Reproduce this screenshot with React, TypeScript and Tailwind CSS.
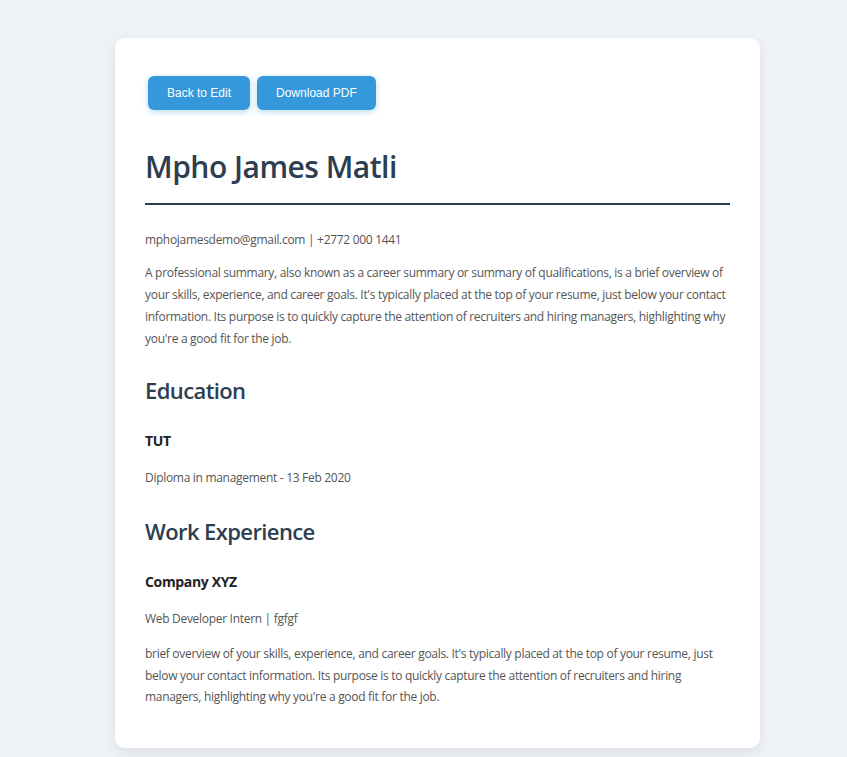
import React from "react";

export default function App() {
  const body = "text-[12px] leading-[22px] text-[#555] tracking-[-0.3px]";
  return (
    <div className="min-h-screen bg-[#eef2f7] pt-[38px] pb-[10px]" style={{ fontFamily: '"Open Sans", "Noto Sans", sans-serif' }}>
      <div className="ml-[115px] w-[645px] rounded-[10px] bg-white px-[30px] pt-[30px] pb-[40px] shadow-[0_4px_12px_rgba(0,0,0,0.08)]">
        <div className="flex gap-[7px] pl-[3px] pt-[8px]" style={{ fontFamily: '"Liberation Sans", Arial, sans-serif' }}>
          <button className="h-[34px] rounded-[6px] bg-[#3498db] px-[19px] text-[12px] text-white shadow-[0_2px_6px_rgba(52,152,219,0.35)]">Back to Edit</button>
          <button className="h-[34px] rounded-[6px] bg-[#3498db] px-[19px] text-[12px] text-white shadow-[0_2px_6px_rgba(52,152,219,0.35)]">Download PDF</button>
        </div>
        <h1 className="mt-[37px] border-b-2 border-[#2c3e50] pb-[16px] text-[30px] leading-[40px] font-semibold tracking-[-0.5px] text-[#2c3e50]">Mpho James Matli</h1>
        <p className={`mt-[24px] ${body}`}>mphojamesdemo@gmail.com | +2772 000 1441</p>
        <p className={`mt-[11px] ${body}`}>
          A professional summary, also known as a career summary or summary of qualifications, is a brief overview of your skills, experience, and career goals. It's typically placed at the top of your resume, just below your contact information. Its purpose is to quickly capture the attention of recruiters and hiring managers, highlighting why you're a good fit for the job.
        </p>
        <h2 className="mt-[24px] text-[22px] leading-[32px] font-semibold tracking-[-0.6px] text-[#2c3e50]">Education</h2>
        <h3 className="mt-[25px] text-[14px] leading-[20px] font-bold tracking-[-0.35px] text-[#222]">TUT</h3>
        <p className={`mt-[16px] ${body}`}>Diploma in management - 13 Feb 2020</p>
        <h2 className="mt-[26px] text-[22px] leading-[32px] font-semibold tracking-[-0.6px] text-[#2c3e50]">Work Experience</h2>
        <h3 className="mt-[25px] text-[14px] leading-[20px] font-bold tracking-[-0.35px] text-[#222]">Company XYZ</h3>
        <p className={`mt-[16px] ${body}`}>Web Developer Intern | fgfgf</p>
        <p className="mt-[13px] text-[12px] leading-[21.5px] text-[#555] tracking-[-0.3px]">
          brief overview of your skills, experience, and career goals. It's typically placed at the top of your resume, just below your contact information. Its purpose is to quickly capture the attention of recruiters and hiring managers, highlighting why you're a good fit for the job.
        </p>
      </div>
    </div>
  );
}
